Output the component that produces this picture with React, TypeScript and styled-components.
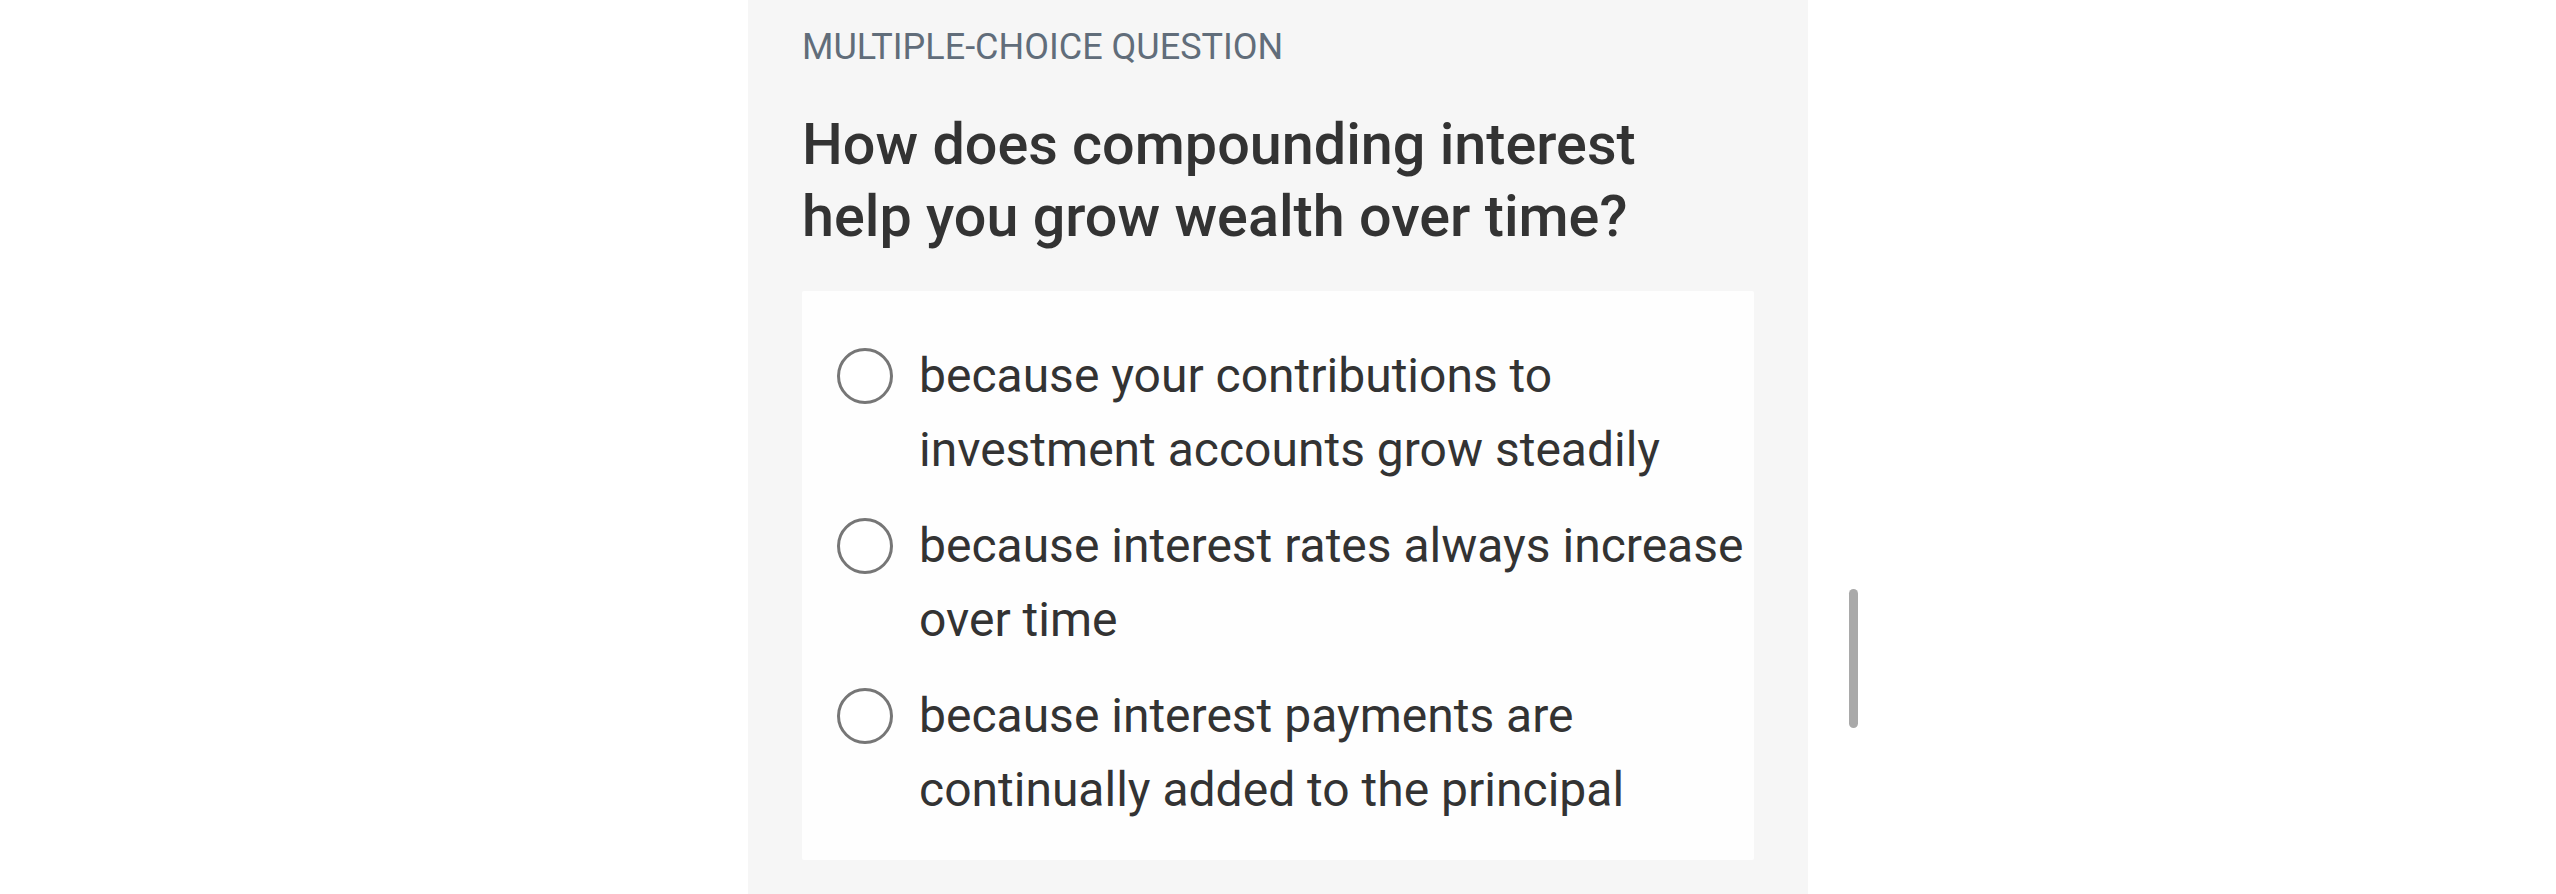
import styled, { createGlobalStyle } from 'styled-components';

const GlobalStyle = createGlobalStyle`
	html, body {
		margin: 0;
		padding: 0;
		background: #ffffff;
	}
	body {
		font-family: Roboto, 'Noto Sans', 'Liberation Sans', sans-serif;
		color: #333333;
	}
`;

const Page = styled.div`
	position: relative;
	display: flex;
	justify-content: center;
	width: 100%;
	height: 894px;
	overflow: hidden;
`;

const Panel = styled.section`
	box-sizing: border-box;
	width: 1060px;
	height: 100%;
	background: #f6f6f6;
	padding: 26px 54px 0;
`;

const Eyebrow = styled.div`
	font-size: 36px;
	line-height: 42px;
	color: #616d7a;
`;

const Question = styled.h1`
	margin: 41px 0 38px;
	font-size: 57.5px;
	line-height: 72px;
	font-weight: 500;
	color: #333333;
`;

const Choices = styled.div`
	display: flex;
	flex-direction: column;
	gap: 22px;
	background: #fefefe;
	border-radius: 2px;
	padding: 48px 8px 33px 35px;
`;

const Choice = styled.label`
	display: flex;
	align-items: flex-start;
	gap: 26px;
	cursor: pointer;
`;

const Radio = styled.span`
	flex: none;
	box-sizing: border-box;
	width: 56px;
	height: 56px;
	margin-top: 9px;
	border: 3px solid #767676;
	border-radius: 50%;
	background: #ffffff;
`;

const ChoiceText = styled.span`
	font-size: 48px;
	line-height: 74px;
	color: #333333;
	white-space: nowrap;
`;

const ScrollThumb = styled.div`
	position: absolute;
	left: 1849px;
	top: 589px;
	width: 9px;
	height: 139px;
	border-radius: 5px;
	background: #a9a9a9;
`;

const choices = [
	['because your contributions to', 'investment accounts grow steadily'],
	['because interest rates always increase', 'over time'],
	['because interest payments are', 'continually added to the principal'],
];

const App = () => {
	return (
		<>
			<GlobalStyle />
			<Page>
				<Panel>
					<Eyebrow>MULTIPLE-CHOICE QUESTION</Eyebrow>
					<Question>
						How does compounding interest
						<br />
						help you grow wealth over time?
					</Question>
					<Choices>
						{choices.map((lines) => (
							<Choice key={lines[0]}>
								<Radio />
								<ChoiceText>
									{lines[0]}
									<br />
									{lines[1]}
								</ChoiceText>
							</Choice>
						))}
					</Choices>
				</Panel>
				<ScrollThumb />
			</Page>
		</>
	);
};

export default App;
